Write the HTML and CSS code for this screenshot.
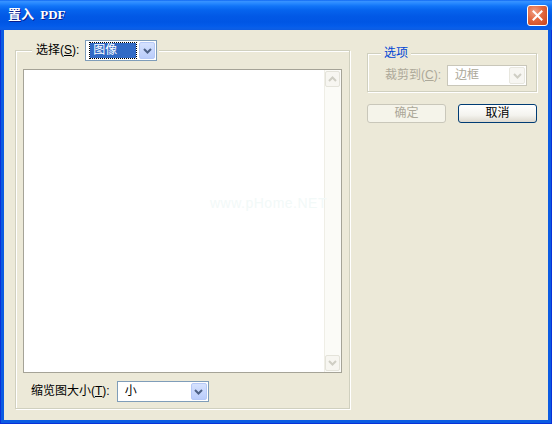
FILE: index.html
```html
<!DOCTYPE html>
<html lang="zh-CN">
<head>
<meta charset="utf-8">
<title>置入 PDF</title>
<link rel="stylesheet" href="styles.css">
</head>
<body>
<div class="window">
  <div class="titlebar">
    <span class="title">置入 PDF</span>
    <button class="close" type="button" aria-label="关闭">
      <svg width="11" height="11" viewBox="0 0 11 11"><path d="M1.5 1.5 L9.5 9.5 M9.5 1.5 L1.5 9.5" stroke="#fff" stroke-width="2" stroke-linecap="square" fill="none"/></svg>
    </button>
  </div>
  <div class="client">
    <fieldset class="group group-select">
      <legend>
        <div class="legend-inner">
          <span class="lbl">选择(<u>S</u>):</span>
          <div class="combo combo-select">
            <span class="combo-value">图像</span>
            <span class="combo-btn"><svg width="9" height="6" viewBox="0 0 9 6"><polyline points="1,1 4.5,4.5 8,1" fill="none" stroke="#4D6185" stroke-width="2"/></svg></span>
          </div>
        </div>
      </legend>
      <div class="listbox">
        <div class="list-area"></div>
        <div class="vscroll">
          <span class="sb-btn"><svg width="9" height="6" viewBox="0 0 9 6"><polyline points="1,5 4.5,1.5 8,5" fill="none" stroke="#CFCEC4" stroke-width="2"/></svg></span>
          <span class="sb-btn"><svg width="9" height="6" viewBox="0 0 9 6"><polyline points="1,1 4.5,4.5 8,1" fill="none" stroke="#CFCEC4" stroke-width="2"/></svg></span>
        </div>
        <span class="watermark">www.pHome.NET</span>
      </div>
      <div class="thumb-row">
        <span class="lbl">缩览图大小(<u>T</u>):</span>
        <div class="combo combo-thumb">
          <span class="combo-value">小</span>
          <span class="combo-btn"><svg width="9" height="6" viewBox="0 0 9 6"><polyline points="1,1 4.5,4.5 8,1" fill="none" stroke="#4D6185" stroke-width="2"/></svg></span>
        </div>
      </div>
    </fieldset>
    <div class="side">
      <fieldset class="group group-options">
        <legend>选项</legend>
        <div class="row">
          <span class="lbl label-disabled">裁剪到(<u>C</u>):</span>
          <div class="combo combo-crop">
            <span class="combo-value">边框</span>
            <span class="combo-btn"><svg width="9" height="6" viewBox="0 0 9 6"><polyline points="1,1 4.5,4.5 8,1" fill="none" stroke="#CFCEC4" stroke-width="2"/></svg></span>
          </div>
        </div>
      </fieldset>
      <div class="buttons">
        <button class="btn" type="button" disabled>确定</button>
        <button class="btn" type="button">取消</button>
      </div>
    </div>
  </div>
</div>
</body>
</html>
```
FILE: styles.css
```css
* { box-sizing: border-box; }
html, body { margin: 0; padding: 0; }
body {
  width: 552px;
  height: 424px;
  overflow: hidden;
  font-family: "Liberation Sans", "Noto Sans CJK SC", sans-serif;
  font-size: 12px;
  color: #000;
  background: #0855DD;
}
.window {
  width: 552px;
  height: 424px;
  display: flex;
  flex-direction: column;
  background: #0B5BE2;
  box-shadow: inset 1px 0 0 #0831D9, inset -1px 0 0 #0831D9, inset 0 -1px 0 #0831D9;
}
.titlebar {
  height: 30px;
  flex: none;
  display: flex;
  align-items: center;
  padding: 0 4px 0 8px;
  background: linear-gradient(to bottom, #0058EE 0px, #3A93FF 1px, #2A8BFF 3px, #1275F8 6px, #0664EE 10px, #0259E6 16px, #0056E4 22px, #035BEA 26px, #0A5FE8 28px, #0B5BE2 30px);
}
.title {
  flex: 1;
  color: #fff;
  font-family: "Liberation Serif", "Noto Sans CJK SC", serif;
  font-weight: bold;
  font-size: 13px;
  line-height: 16px;
  text-shadow: 1px 1px 0 #0A1E8C;
  word-spacing: 3px;
}
.close {
  width: 21px;
  height: 21px;
  padding: 0;
  border: 1px solid #fff;
  border-radius: 3px;
  background: radial-gradient(circle at 35% 30%, #F0A085 0%, #E3683F 45%, #C8431A 100%);
  display: flex;
  align-items: center;
  justify-content: center;
}
.client {
  flex: 1;
  margin: 0 4px 4px;
  background: #ECE9D8;
  display: flex;
  align-items: flex-start;
  gap: 17px;
  padding: 10px 11px 0;
}
.group {
  margin: 0;
  min-width: 0;
  border: 1px solid #D0D0BF;
  box-shadow: inset 1px 1px 0 #fff, 1px 1px 0 #fff;
}
.group-select {
  width: 335px;
  padding: 8px 7px 6px;
}
.group-select > legend {
  margin-left: 9px;
  padding: 0 2px 0 4px;
  background: #ECE9D8;
}
.legend-inner {
  display: flex;
  align-items: center;
  gap: 6px;
}
.lbl { line-height: 15px; white-space: nowrap; }
.lbl u { text-underline-offset: 1px; }

.combo {
  height: 21px;
  border: 1px solid #7F9DB9;
  background: #fff;
  display: flex;
  align-items: center;
  padding: 1px;
}
.combo-value {
  flex: 1;
  padding-left: 6px;
  line-height: 15px;
  white-space: nowrap;
}
.combo-btn {
  width: 16px;
  height: 17px;
  flex: none;
  border: 1px solid #B6C9F7;
  border-radius: 2px;
  background: linear-gradient(#D6E2FE, #BACDFB);
  display: flex;
  align-items: center;
  justify-content: center;
}
.combo-select { width: 72px; }
.combo-select .combo-value {
  height: 17px;
  margin: 0 2px 0 2px;
  padding-left: 3px;
  border: 1px dotted #000;
  background: #fff;
  box-shadow: inset 0 0 0 20px #316AC5;
  color: #fff;
  display: flex;
  align-items: center;
}
.combo-thumb { width: 92px; }
.combo-crop { width: 80px; border-color: #C9C7BA; }
.combo-crop .combo-value { color: #ACA899; }
.combo-crop .combo-btn { border-color: #E8E7DF; background: #F7F6F2; }

.listbox {
  position: relative;
  height: 304px;
  display: flex;
  border: 1px solid #A5A397;
  background: #fff;
}
.list-area { flex: 1; }
.vscroll {
  width: 17px;
  flex: none;
  border-left: 1px solid #EFEEE6;
  background: #FBFBF7;
  display: flex;
  flex-direction: column;
  justify-content: space-between;
  padding: 1px 1px 1px 0;
}
.sb-btn {
  height: 16px;
  border: 1px solid #E4E3DA;
  border-radius: 2px;
  background: #F7F6F1;
  display: flex;
  align-items: center;
  justify-content: center;
}
.watermark {
  position: absolute;
  left: 186px;
  top: 125px;
  color: #F2F9F8;
  font-size: 14px;
  letter-spacing: 0.5px;
}
.thumb-row {
  display: flex;
  align-items: center;
  gap: 7px;
  margin-top: 8px;
  padding-left: 8px;
}

.side {
  width: 170px;
  margin-top: 6px;
  display: flex;
  flex-direction: column;
}
.group-options {
  width: 170px;
  padding: 4px 9px 5px 13px;
}
.group-options > legend {
  padding: 0 3px;
  line-height: 15px;
  color: #0046D5;
  background: #ECE9D8;
}
.row {
  display: flex;
  align-items: center;
  justify-content: space-between;
  padding-left: 4px;
}
.label-disabled { color: #ACA899; }

.buttons {
  display: flex;
  justify-content: space-between;
  margin-top: 12px;
}
.btn {
  width: 79px;
  height: 19px;
  padding: 0;
  font: inherit;
  line-height: 15px;
  color: #000;
  border: 1px solid #003C74;
  border-radius: 3px;
  background: linear-gradient(#FFFFFF, #F4F3EE 60%, #DDD9CF);
}
.btn:disabled {
  border-color: #C9C7BA;
  background: #F5F4EA;
  color: #ACA899;
}
```
